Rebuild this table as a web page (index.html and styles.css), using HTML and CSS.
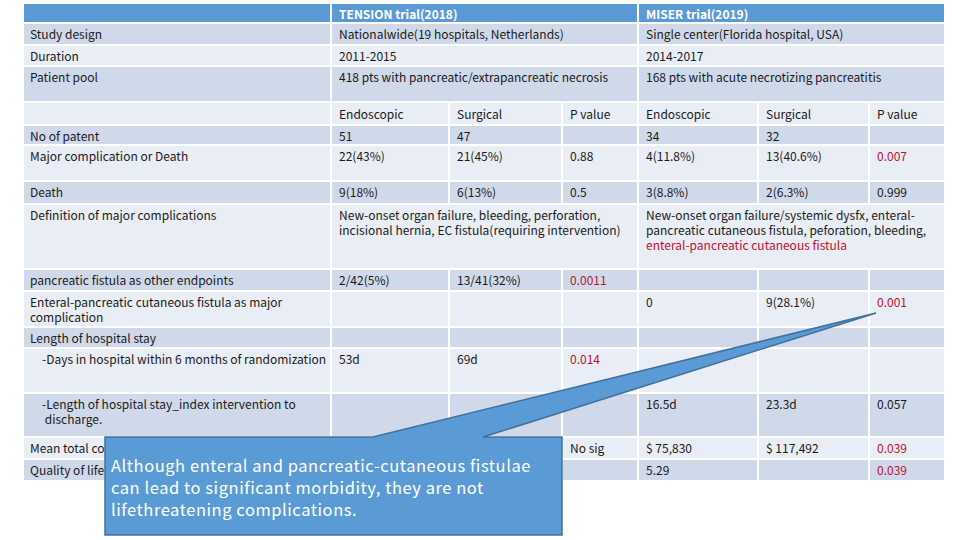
FILE: index.html
```html
<!DOCTYPE html>
<html>
<head>
<meta charset="utf-8">
<link rel="stylesheet" href="styles.css">
</head>
<body>
<div class="page">
  <div class="tbl">
    <div class="row head h18"><div></div><div class="s3">TENSION trial(2018)</div><div class="s3">MISER trial(2019)</div></div>
    <div class="row dark h20"><div>Study design</div><div class="s3">Nationalwide(19 hospitals, Netherlands)</div><div class="s3">Single center(Florida hospital, USA)</div></div>
    <div class="row light h19"><div>Duration</div><div class="s3">2011-2015</div><div class="s3">2014-2017</div></div>
    <div class="row dark h34"><div>Patient pool</div><div class="s3">418 pts with pancreatic/extrapancreatic necrosis</div><div class="s3">168 pts with acute necrotizing pancreatitis</div></div>
    <div class="row light h21 sub"><div></div><div>Endoscopic</div><div>Surgical</div><div>P value</div><div>Endoscopic</div><div>Surgical</div><div>P value</div></div>
    <div class="row dark h18"><div>No of patent</div><div>51</div><div>47</div><div></div><div>34</div><div>32</div><div></div></div>
    <div class="row light h34"><div>Major complication or Death</div><div>22(43%)</div><div>21(45%)</div><div>0.88</div><div>4(11.8%)</div><div>13(40.6%)</div><div class="red">0.007</div></div>
    <div class="row dark h21"><div>Death</div><div>9(18%)</div><div>6(13%)</div><div>0.5</div><div>3(8.8%)</div><div>2(6.3%)</div><div>0.999</div></div>
    <div class="row light h63"><div>Definition of major complications</div><div class="s3">New-onset organ failure, bleeding, perforation,<br>incisional hernia, EC fistula(requiring intervention)</div><div class="s3">New-onset organ failure/systemic dysfx, enteral-<br>pancreatic cutaneous fistula, peforation, bleeding,<br><span class="red">enteral-pancreatic cutaneous fistula</span></div></div>
    <div class="row dark h20"><div>pancreatic fistula as other endpoints</div><div>2/42(5%)</div><div>13/41(32%)</div><div class="red">0.0011</div><div></div><div></div><div></div></div>
    <div class="row light h34"><div>Enteral-pancreatic cutaneous fistula as major<br>complication</div><div></div><div></div><div></div><div>0</div><div>9(28.1%)</div><div class="red">0.001</div></div>
    <div class="row dark h19"><div>Length of hospital stay</div><div></div><div></div><div></div><div></div><div></div><div></div></div>
    <div class="row light h43"><div class="ind">-Days in hospital within 6 months of randomization</div><div>53d</div><div>69d</div><div class="red">0.014</div><div></div><div></div><div></div></div>
    <div class="row dark h42"><div class="ind">-Length of hospital stay_index intervention to<br>&nbsp;discharge.</div><div></div><div></div><div></div><div>16.5d</div><div>23.3d</div><div>0.057</div></div>
    <div class="row light h20"><div>Mean total cost</div><div></div><div></div><div>No sig</div><div>$ 75,830</div><div>$ 117,492</div><div class="red">0.039</div></div>
    <div class="row dark h20"><div>Quality of life</div><div></div><div></div><div></div><div>5.29</div><div></div><div class="red">0.039</div></div>
  </div>

  <svg class="callout-shape" width="960" height="540" viewBox="0 0 960 540">
    <polygon points="105,437 373,437 876,313 483,437 562,437 562,535 105,535" fill="#5b9bd5" stroke="#41719c" stroke-width="1.5" stroke-linejoin="miter"/>
  </svg>
  <div class="callout-text">Although enteral and pancreatic-cutaneous fistulae<br>can lead to significant morbidity, they are not<br>lifethreatening complications.</div>
</div>
</body>
</html>
```
FILE: styles.css
```css
* { box-sizing: border-box; }
html, body { margin: 0; padding: 0; background: #ffffff; }
body {
  font-family: "Noto Sans CJK KR", "Noto Sans", sans-serif;
  color: #1a1a1a;
}
.page {
  position: relative;
  width: 960px;
  height: 540px;
  overflow: hidden;
}
.tbl {
  display: flex;
  flex-direction: column;
  gap: 2px;
  width: 920px;
  margin: 4px 0 0 24px;
}
.row {
  display: grid;
  grid-template-columns: 306px 116px 111px 74px 118px 109px 74px;
  column-gap: 2px;
}
.row > div {
  padding: 2px 6px 0 7px;
  font-size: 12px;
  line-height: 15px;
  white-space: nowrap;
  overflow: visible;
}
.row > div:first-child { padding-left: 6px; }
.row > div.ind { padding-left: 18px; }
.s3 { grid-column: span 3; }
.head > div { background: #5b9bd5; color: #fff; font-weight: bold; }
.dark > div { background: #d0d9ea; }
.light > div { background: #e9edf5; }
.red { color: #c0102c; }
.h18 { height: 18px; }
.h19 { height: 19px; }
.h20 { height: 20px; }
.h21 { height: 21px; }
.h34 { height: 34px; }
.h42 { height: 42px; }
.h43 { height: 43px; }
.h63 { height: 63px; }
.sub > div { padding-top: 3px; }

.callout-shape {
  position: absolute;
  left: 0;
  top: 0;
}
.callout-text {
  position: absolute;
  left: 111px;
  top: 454px;
  font-size: 16.5px;
  line-height: 22px;
  letter-spacing: 0.55px;
  color: #fff;
  white-space: nowrap;
}
```
